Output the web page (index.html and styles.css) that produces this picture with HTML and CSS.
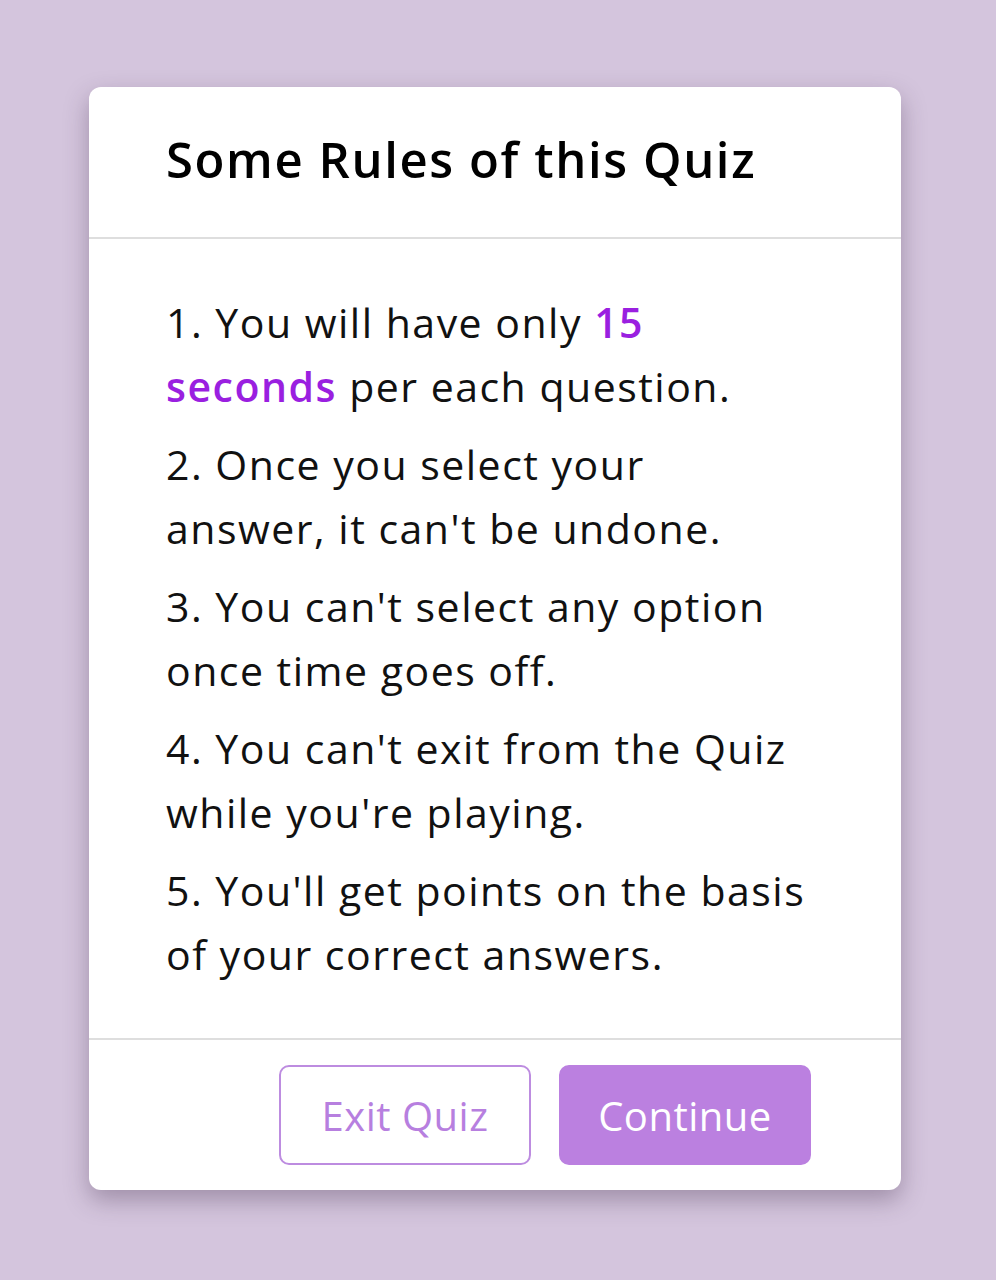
FILE: index.html
```html
<!DOCTYPE html>
<html lang="en">
<head>
<meta charset="utf-8">
<title>Quiz Rules</title>
<link rel="stylesheet" href="styles.css">
</head>
<body>
<div class="info-box">
  <div class="info-title"><span>Some Rules of this Quiz</span></div>
  <div class="info-list">
    <div class="info">1. You will have only <span class="hl">15 seconds</span> per each question.</div>
    <div class="info">2. Once you select your answer, it can't be undone.</div>
    <div class="info">3. You can't select any option once time goes off.</div>
    <div class="info">4. You can't exit from the Quiz while you're playing.</div>
    <div class="info">5. You'll get points on the basis of your correct answers.</div>
  </div>
  <div class="buttons">
    <button class="btn quit">Exit Quiz</button>
    <button class="btn restart">Continue</button>
  </div>
</div>
</body>
</html>
```

FILE: styles.css
```css
* { box-sizing: border-box; }
html, body { margin: 0; padding: 0; }
body {
  background: #d4c5dd;
  min-height: 1280px;
  padding: 87px 0 0 89px;
  font-family: "Open Sans", "DejaVu Sans", sans-serif;
}
.info-box {
  width: 812px;
  background: #fff;
  border-radius: 12px;
  box-shadow: 0 10px 24px rgba(60, 40, 70, 0.35);
}
.info-title {
  height: 152px;
  display: flex;
  align-items: center;
  padding: 0 77px 6px;
  border-bottom: 2px solid #dedede;
  font-size: 49px;
  font-weight: 600;
  letter-spacing: 1.6px;
  color: #000;
}
.info-list {
  padding: 37px 90px 38px 77px;
}
.info {
  font-size: 41px;
  line-height: 64px;
  letter-spacing: 1.5px;
  color: #111;
  margin: 14px 0;
}
.hl {
  color: #9a1fe0;
  font-weight: 600;
}
.buttons {
  height: 152px;
  border-top: 2px solid #dedede;
  display: flex;
  align-items: center;
  justify-content: flex-end;
  gap: 28px;
  padding: 0 90px 0 0;
}
.btn {
  width: 252px;
  height: 100px;
  border-radius: 10px;
  font-family: inherit;
  font-size: 40px;
  font-weight: 500;
  letter-spacing: 0.5px;
  cursor: pointer;
}
.quit {
  background: #fff;
  color: #b77fdf;
  border: 2px solid #bd8ce0;
}
.restart {
  background: #bb80e0;
  color: #fff;
  border: 2px solid #bb80e0;
}
```
